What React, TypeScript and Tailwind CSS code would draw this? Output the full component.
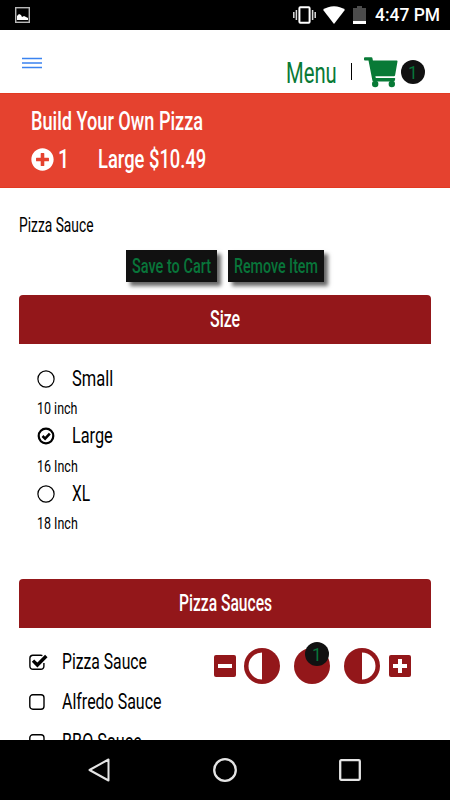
import { useLayoutEffect, useRef, useState } from "react";
import { FaPlusCircle } from "react-icons/fa";

/* Squeezes a line of text into a fixed width, for a condensed look */
function Condensed({ text, width, className = "" }: { text: string; width: number; className?: string }) {
  const ref = useRef<HTMLSpanElement>(null);
  const [scale, setScale] = useState(1);

  useLayoutEffect(() => {
    if (ref.current) setScale(width / ref.current.offsetWidth);
  }, [text, width]);

  return (
    <span className={`block shrink-0 whitespace-nowrap leading-none ${className}`} style={{ width }}>
      <span ref={ref} className="inline-block origin-left" style={{ transform: `scaleX(${scale})` }}>
        {text}
      </span>
    </span>
  );
}

function StatusBar() {
  return (
    <div className="flex h-[30px] items-center bg-black pl-[15px] text-white">
      <svg width="15" height="16" viewBox="0 0 15 16">
        <rect x=".7" y=".7" width="13.6" height="14.6" fill="none" stroke="#b8b8b8" strokeWidth="1.4" />
        <path d="M2 13V9l2-2 2 1 1 2 2-1 2 1 2 1v2z" fill="#fff" />
      </svg>
      <svg className="ml-[263px]" width="23" height="18" viewBox="0 0 23 18">
        <path d="M.8 6v6M3.4 4v10M22.2 6v6M19.6 4v10" stroke="#ddd" strokeWidth="1.5" />
        <rect x="6.4" y="1.3" width="10.2" height="15.4" rx="1" fill="none" stroke="#fff" strokeWidth="2" />
      </svg>
      <svg className="ml-[7px]" width="22" height="18" viewBox="0 0 22 18">
        <path d="M0 3.8C6-1 16-1 22 3.8L11 18z" fill="#fff" />
      </svg>
      <svg className="ml-[8px]" width="13" height="18" viewBox="0 0 13 18">
        <path d="M0 2h4V0h5v2h4v16H0z" fill="#4c4c4c" />
        <path d="M0 15h13v3H0z" fill="#fff" />
      </svg>
      <Condensed text="4:47 PM" width={65} className="ml-[8.5px] mt-[1px] text-[18.5px] font-medium" />
    </div>
  );
}

function CountBadge({ className = "" }: { className?: string }) {
  return (
    <span className={`flex size-6 items-center justify-center rounded-full bg-[#111] text-[#08753a] ${className}`}>
      <Condensed text="1" width={10} className="text-[19px]" />
    </span>
  );
}

function CartIcon({ className = "" }: { className?: string }) {
  return (
    <svg className={className} width="34" height="31" viewBox="0 0 34 31" fill="#087a36">
      <path d="M1 .2h6.4q.8 0 1 .8l.5 2.4h23.8q1 0 .8 1l-2.4 13.8q-.2 1-1.2 1H11.4l.4 1.8h18.6q1 0 .8 1l-.5 1.8q-.2.8-1.2.8H9.6q-1 0-1.2-1L4.5 3.5H1q-1 0-1-1V1.2q0-1 1-1z" />
      <circle cx="11.2" cy="27" r="3.2" />
      <circle cx="27.8" cy="27" r="3.2" />
    </svg>
  );
}

function TopNav() {
  return (
    <div className="flex h-[63px] items-start pl-[22px]">
      <svg className="mt-[27px]" width="20" height="13" viewBox="0 0 20 13">
        <path d="M0 1.5h20M0 6h20M0 10.5h20" stroke="#3b83f0" strokeWidth="1.4" />
      </svg>
      <Condensed text="Menu" width={51} className="ml-[243.5px] mt-[28.5px] text-[29px] text-[#087a36]" />
      <span className="ml-[14.5px] mt-[33px] h-[17px] w-px bg-black" />
      <CartIcon className="ml-[12px] mt-[27px]" />
      <CountBadge className="ml-[3px] mt-[30px]" />
    </div>
  );
}

function PizzaHeader() {
  return (
    <div className="h-[94.5px] border-y border-[#e23a22] bg-[#e5422f] text-[25px] text-white">
      <Condensed text="Build Your Own Pizza" width={172} className="ml-[30.5px] mt-[15px] font-medium" />
      <div className="mt-[13px] flex items-center pl-[31px]">
        <FaPlusCircle size={23} />
        <Condensed text="1" width={11} className="ml-[3.5px] font-medium" />
        <Condensed text="Large $10.49" width={108} className="ml-[29px] font-medium" />
      </div>
    </div>
  );
}

function DarkButton({ label, width }: { label: string; width: number }) {
  return (
    <button className="flex h-[32px] items-center bg-[#111] px-[6px] text-left text-[20px] text-[#08753a] shadow-[4px_4px_4px_rgba(0,0,0,0.6)]">
      <Condensed text={label} width={width} className="font-medium" />
    </button>
  );
}

function SectionTitle({ label, width }: { label: string; width: number }) {
  return (
    <div className="mx-[19px] flex h-[48.5px] items-center justify-center rounded-t-[4px] bg-[#93171a] text-[23px] font-medium text-white">
      <Condensed text={label} width={width} />
    </div>
  );
}

const sizes = [
  { name: "Small", width: 41, inches: "10 inch", checked: false },
  { name: "Large", width: 40.5, inches: "16 Inch", checked: true },
  { name: "XL", width: 18, inches: "18 Inch", checked: false },
];

function SizeOption({ name, width, inches, checked }: (typeof sizes)[number]) {
  return (
    <div className="h-[57.5px] pl-[37px]">
      <div className="flex h-[26px] items-center">
        <svg width="18" height="18" viewBox="0 0 18 18" fill="none" stroke="#000">
          {checked ? (
            <>
              <circle cx="9" cy="9" r="7.3" strokeWidth="2.2" />
              <path d="M5.5 9l2.6 2.6 4.7-4.9" strokeWidth="2.6" />
            </>
          ) : (
            <circle cx="9" cy="9" r="8.1" strokeWidth="1.2" />
          )}
        </svg>
        <Condensed text={name} width={width} className="-mt-px ml-[16.5px] text-[22.5px]" />
      </div>
      <Condensed text={inches} width={40.5} className="mt-[9.5px] text-[16px]" />
    </div>
  );
}

function Checkbox({ checked = false }: { checked?: boolean }) {
  return (
    <svg className="shrink-0" width="19" height="16" viewBox="0 0 19 16" fill="none" stroke="#000">
      {checked ? (
        <>
          <path d="M14.9 9v3.3a3 3 0 0 1-3 3h-8a3 3 0 0 1-3-3v-8a3 3 0 0 1 3-3h8q1 0 1.5.3" strokeWidth="1.4" />
          <path d="M4 6.6l4.4 4.4L17.3 2" strokeWidth="3.4" />
        </>
      ) : (
        <rect x=".8" y=".8" width="14.2" height="14.4" rx="3" strokeWidth="1.4" />
      )}
    </svg>
  );
}

function AmountButton({ plus = false }: { plus?: boolean }) {
  return (
    <svg width="22" height="22" viewBox="0 0 22 22">
      <rect width="22" height="22" rx="2" fill="#93171a" />
      <path d={plus ? "M4 11h14M11 4v14" : "M4 11h14"} stroke="#fff" strokeWidth="4" />
    </svg>
  );
}

function HalfCircle({ side }: { side: "left" | "right" }) {
  return (
    <svg width="36" height="36" viewBox="0 0 36 36">
      <circle cx="18" cy="18" r="18" fill="#93171a" />
      <path d={side === "left" ? "M18 4.5a13.5 13.5 0 0 0 0 27z" : "M18 4.5a13.5 13.5 0 0 1 0 27z"} fill="#fff" />
    </svg>
  );
}

function SauceControls() {
  return (
    <div className="ml-[67px] mt-[7px] flex items-center">
      <AmountButton />
      <span className="ml-[8px]"><HalfCircle side="left" /></span>
      <span className="relative ml-[14.5px] size-9 rounded-full bg-[#93171a]">
        <CountBadge className="absolute -top-[5.5px] left-[10.5px]" />
      </span>
      <span className="ml-[13.5px]"><HalfCircle side="right" /></span>
      <span className="ml-[9px]"><AmountButton plus /></span>
    </div>
  );
}

const sauces = [
  { name: "Pizza Sauce", width: 85, checked: true },
  { name: "Alfredo Sauce", width: 99.5, checked: false },
  { name: "BBQ Sauce", width: 79.5, checked: false },
];

function SystemNav() {
  return (
    <div className="flex h-[60px] shrink-0 items-center justify-center gap-[101px] bg-black">
      <svg width="24" height="24" viewBox="0 0 24 24" fill="none" stroke="#e4e4e4" strokeWidth="2" strokeLinejoin="round">
        <path d="M20.5 1.5v21L1.5 12z" />
      </svg>
      <svg width="24" height="24" viewBox="0 0 24 24" fill="none" stroke="#e4e4e4" strokeWidth="2.3">
        <circle cx="12" cy="12" r="10.8" />
      </svg>
      <svg width="24" height="24" viewBox="0 0 24 24" fill="none" stroke="#e4e4e4" strokeWidth="2.3">
        <rect x="2.2" y="2.2" width="19.6" height="19.6" rx="1" />
      </svg>
    </div>
  );
}

export default function App() {
  return (
    <div className="flex h-[800px] w-[450px] flex-col overflow-hidden bg-white font-['Roboto',sans-serif] text-black">
      <div className="h-[740px] overflow-hidden">
        <StatusBar />
        <TopNav />
        <PizzaHeader />

        <Condensed text="Pizza Sauce" width={74.5} className="ml-[18.5px] mt-[27px] text-[20px]" />
        <div className="mt-[15.5px] flex gap-[11px] pl-[126px]">
          <DarkButton label="Save to Cart" width={79} />
          <DarkButton label="Remove Item" width={84} />
        </div>

        {/* Sizes */}
        <div className="mt-[13px]">
          <SectionTitle label="Size" width={30.5} />
        </div>
        <div className="mt-[22px] h-[213.5px]">
          {sizes.map((s) => (
            <SizeOption key={s.name} {...s} />
          ))}
        </div>

        {/* Sauces */}
        <SectionTitle label="Pizza Sauces" width={93} />
        <div className="mt-[14.5px]">
          {sauces.map((s) => (
            <div key={s.name} className="flex h-10 items-center pl-[29px]">
              <Checkbox checked={s.checked} />
              <Condensed text={s.name} width={s.width} className="ml-[13.5px] text-[22px]" />
              {s.checked && <SauceControls />}
            </div>
          ))}
        </div>
      </div>
      <SystemNav />
    </div>
  );
}
